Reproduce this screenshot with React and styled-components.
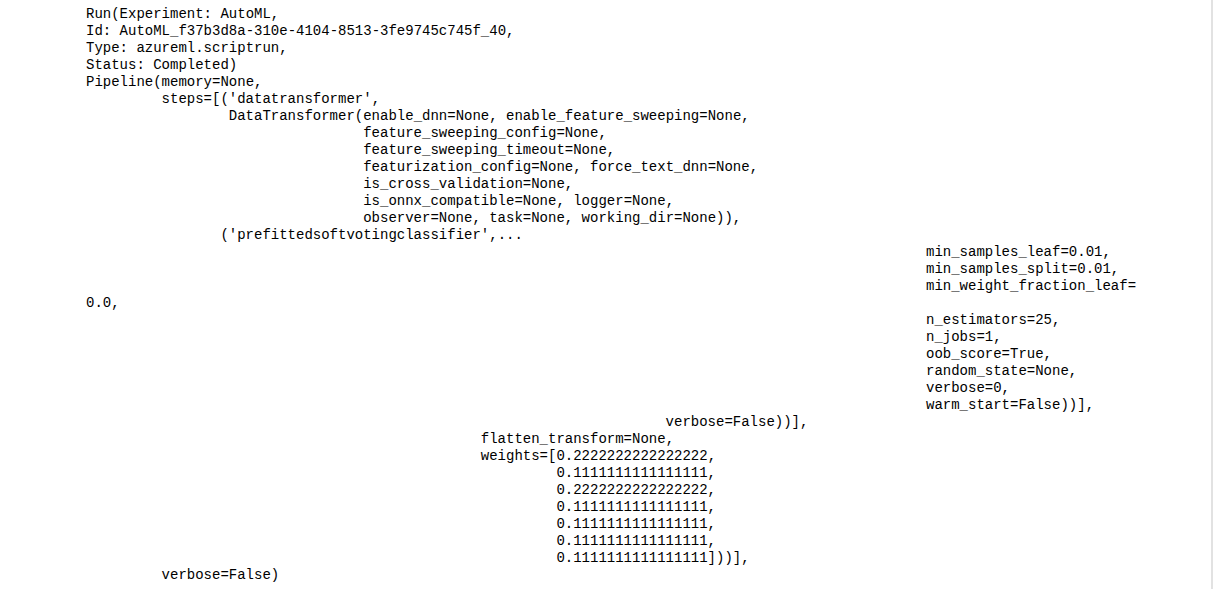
import React from 'react'
import styled, { createGlobalStyle } from 'styled-components';

const GlobalStyle = createGlobalStyle`
  html, body {
    margin: 0;
    padding: 0;
    background: #fff;
  }
`;

// [indent in columns, text]
const lines = [
  [0, 'Run(Experiment: AutoML,'],
  [0, 'Id: AutoML_f37b3d8a-310e-4104-8513-3fe9745c745f_40,'],
  [0, 'Type: azureml.scriptrun,'],
  [0, 'Status: Completed)'],
  [0, 'Pipeline(memory=None,'],
  [9, "steps=[('datatransformer',"],
  [17, 'DataTransformer(enable_dnn=None, enable_feature_sweeping=None,'],
  [33, 'feature_sweeping_config=None,'],
  [33, 'feature_sweeping_timeout=None,'],
  [33, 'featurization_config=None, force_text_dnn=None,'],
  [33, 'is_cross_validation=None,'],
  [33, 'is_onnx_compatible=None, logger=None,'],
  [33, 'observer=None, task=None, working_dir=None)),'],
  [16, "('prefittedsoftvotingclassifier',..."],
  [100, 'min_samples_leaf=0.01,'],
  [100, 'min_samples_split=0.01,'],
  [100, 'min_weight_fraction_leaf='],
  [0, '0.0,'],
  [100, 'n_estimators=25,'],
  [100, 'n_jobs=1,'],
  [100, 'oob_score=True,'],
  [100, 'random_state=None,'],
  [100, 'verbose=0,'],
  [100, 'warm_start=False))],'],
  [69, 'verbose=False))],'],
  [47, 'flatten_transform=None,'],
  [47, 'weights=[0.2222222222222222,'],
  [56, '0.1111111111111111,'],
  [56, '0.2222222222222222,'],
  [56, '0.1111111111111111,'],
  [56, '0.1111111111111111,'],
  [56, '0.1111111111111111,'],
  [56, '0.1111111111111111]))],'],
  [9, 'verbose=False)'],
];

export default function App() {
  return (
    <>
      <GlobalStyle />
      <Page>
        <OutputArea>
          <Output>
            {lines.map(([indent, text], i) => (
              <Line key={i} $indent={indent}>{text}</Line>
            ))}
          </Output>
        </OutputArea>
      </Page>
    </>
  )
}

const Page = styled.div`
  width: 1215px;
  height: 589px;
  overflow: hidden;
  background: #fff;
`;

const OutputArea = styled.div`
  width: 1213px;
  height: 100%;
  box-sizing: border-box;
  border-right: 2px solid #e2e2e2;
  padding: 6px 0 0 86px;
`;

const Output = styled.div`
  font-family: 'Liberation Mono', monospace;
  font-size: 14px;
  line-height: 17px;
  color: #000;
`;

const Line = styled.div`
  white-space: pre;
  height: 17px;
  padding-left: ${p => p.$indent * 8.4}px;
`;
